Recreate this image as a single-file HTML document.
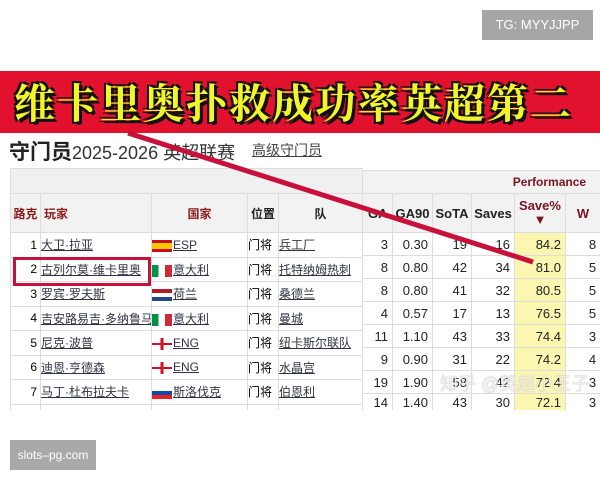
<!DOCTYPE html>
<html><head><meta charset="utf-8"><style>
*{margin:0;padding:0;box-sizing:border-box}
body{width:600px;height:480px;background:#fff;position:relative;overflow:hidden;font-family:"Liberation Sans","Noto Sans CJK SC",sans-serif}
.a{position:absolute}
.tg{left:482px;top:10px;width:111px;height:30px;background:#a6a6a6;color:#fff;font-size:13px;line-height:30px;text-align:center}
.sl{left:10px;top:440px;width:86px;height:30px;background:#a9a9a9;color:#fff;font-size:12px;line-height:30px;text-align:center}
.ban{left:0;top:71px;width:600px;height:62px;background:#e2112e}
.bt{left:14px;top:72px;width:590px;font-size:41px;line-height:58px;font-weight:bold;color:#f2f52a;font-family:"Noto Serif CJK SC","Noto Sans CJK SC",serif;letter-spacing:2px;white-space:nowrap;text-shadow:-2px -2px 0 #111,2px -2px 0 #111,-2px 2px 0 #111,2px 2px 0 #111,3px 3px 0 #111}
.ti{left:9px;top:136px;font-size:21px;font-weight:bold;color:#222;white-space:nowrap}
.ti span{font-size:18px;font-weight:normal;color:#333}
.lk{left:252px;top:140px;font-size:14px;color:#444;text-decoration:underline}
table{border-collapse:collapse;position:absolute;font-size:12px;table-layout:fixed}
td{border:1px solid #ddd;white-space:nowrap;overflow:hidden}
.L{left:10px;top:168px;width:352px}
.R{left:362px;top:170px;width:238px}
.hd td{background:#f2f2f2;font-weight:bold;color:#8b1a1a;text-align:center}
.lnk{color:#334;text-decoration:underline}
.y{background:#fbf7b0}
.R td{text-align:right;padding-right:4px;font-size:13px;color:#222}
.fl{display:inline-block;width:20px;height:12px;vertical-align:middle;margin-right:1px}
</style></head><body>
<div class="a tg">TG: MYYJJPP</div>
<div class="a ban"></div>
<div class="a bt">维卡里奥扑救成功率英超第二</div>
<div class="a ti">守门员<span>2025-2026 英超联赛</span></div>
<div class="a lk">高级守门员</div>

<table class="L">
<colgroup><col style="width:30px"><col style="width:111px"><col style="width:96px"><col style="width:31px"><col style="width:84px"></colgroup>
<tr class="hd"><td colspan="5" style="height:25px;background:#f0f0f0"></td></tr>
<tr class="hd" style="height:39px"><td>路克</td><td style="text-align:left;padding-left:3px">玩家</td><td>国家</td><td style="color:#222">位置</td><td style="color:#222">队</td></tr>
<tr style="height:24.5px"><td style="text-align:right;padding-right:3px">1</td><td class="lnk">大卫·拉亚</td><td><span class="fl" style="background:linear-gradient(#c60b1e 25%,#ffc400 25%,#ffc400 75%,#c60b1e 75%)"></span><span class="lnk">ESP</span></td><td>门将</td><td class="lnk">兵工厂</td></tr>
<tr style="height:24.5px"><td style="text-align:right;padding-right:3px">2</td><td class="lnk">古列尔莫·维卡里奥</td><td><span class="fl" style="background:linear-gradient(90deg,#009246 33%,#fff 33%,#fff 66%,#ce2b37 66%)"></span><span class="lnk">意大利</span></td><td>门将</td><td class="lnk">托特纳姆热刺</td></tr>
<tr style="height:24.5px"><td style="text-align:right;padding-right:3px">3</td><td class="lnk">罗宾·罗夫斯</td><td><span class="fl" style="background:linear-gradient(#ae1c28 33%,#fff 33%,#fff 66%,#21468b 66%)"></span><span class="lnk">荷兰</span></td><td>门将</td><td class="lnk">桑德兰</td></tr>
<tr style="height:24.5px"><td style="text-align:right;padding-right:3px">4</td><td class="lnk">吉安路易吉·多纳鲁马</td><td><span class="fl" style="background:linear-gradient(90deg,#009246 33%,#fff 33%,#fff 66%,#ce2b37 66%)"></span><span class="lnk">意大利</span></td><td>门将</td><td class="lnk">曼城</td></tr>
<tr style="height:24.5px"><td style="text-align:right;padding-right:3px">5</td><td class="lnk">尼克·波普</td><td><span class="fl" style="background:linear-gradient(90deg,transparent 42%,#ce1124 42%,#ce1124 58%,transparent 58%),linear-gradient(#fff 40%,#ce1124 40%,#ce1124 60%,#fff 60%)"></span><span class="lnk">ENG</span></td><td>门将</td><td class="lnk">纽卡斯尔联队</td></tr>
<tr style="height:24.5px"><td style="text-align:right;padding-right:3px">6</td><td class="lnk">迪恩·亨德森</td><td><span class="fl" style="background:linear-gradient(90deg,transparent 42%,#ce1124 42%,#ce1124 58%,transparent 58%),linear-gradient(#fff 40%,#ce1124 40%,#ce1124 60%,#fff 60%)"></span><span class="lnk">ENG</span></td><td>门将</td><td class="lnk">水晶宫</td></tr>
<tr style="height:24.5px"><td style="text-align:right;padding-right:3px">7</td><td class="lnk">马丁·杜布拉夫卡</td><td><span class="fl" style="background:linear-gradient(#fff 33%,#0b4ea2 33%,#0b4ea2 66%,#ee1c25 66%)"></span><span class="lnk">斯洛伐克</span></td><td>门将</td><td class="lnk">伯恩利</td></tr>
<tr style="height:20px"><td></td><td></td><td></td><td></td><td></td></tr>
</table>

<table class="R">
<colgroup><col style="width:30px"><col style="width:40px"><col style="width:39px"><col style="width:43px"><col style="width:51px"><col style="width:35px"></colgroup>
<tr class="hd"><td colspan="6" style="height:23px;text-align:right;padding-right:14px;font-size:12px;color:#7a1420">Performance</td></tr>
<tr class="hd" style="height:39px"><td style="color:#222;text-align:left;padding-left:5px">GA</td><td style="color:#222;text-align:center;padding:0">GA90</td><td style="color:#222;text-align:center;padding:0">SoTA</td><td style="color:#222;text-align:center;padding:0">Saves</td><td class="y" style="text-align:center;line-height:14px;padding:0;color:#7a1420">Save%<br>▼</td><td style="text-align:center;padding:0;color:#7a1420">W</td></tr>
<tr style="height:23px"><td>3</td><td>0.30</td><td>19</td><td>16</td><td class="y">84.2</td><td>8</td></tr>
<tr style="height:23px"><td>8</td><td>0.80</td><td>42</td><td>34</td><td class="y">81.0</td><td>5</td></tr>
<tr style="height:23px"><td>8</td><td>0.80</td><td>41</td><td>32</td><td class="y">80.5</td><td>5</td></tr>
<tr style="height:23px"><td>4</td><td>0.57</td><td>17</td><td>13</td><td class="y">76.5</td><td>5</td></tr>
<tr style="height:23px"><td>11</td><td>1.10</td><td>43</td><td>33</td><td class="y">74.4</td><td>3</td></tr>
<tr style="height:23px"><td>9</td><td>0.90</td><td>31</td><td>22</td><td class="y">74.2</td><td>4</td></tr>
<tr style="height:23px"><td>19</td><td>1.90</td><td>58</td><td>42</td><td class="y">72.4</td><td>3</td></tr>
<tr style="height:17px"><td>14</td><td>1.40</td><td>43</td><td>30</td><td class="y">72.1</td><td>3</td></tr>
</table>
<div class="a" style="left:0;top:410px;width:600px;height:30px;background:#fff"></div>
<div class="a" style="left:440px;top:370px;font-size:18px;color:rgba(255,255,255,.8);text-shadow:0 0 1px #999;white-space:nowrap">知乎 @英超小王子</div>
<div class="a" style="left:13px;top:257px;width:138px;height:29px;border:3px solid #c8113a"></div>
<svg class="a" style="left:0;top:0" width="600" height="480"><line x1="128" y1="133" x2="533" y2="262" stroke="#c8113a" stroke-width="5"/></svg>
<div class="a sl">slots–pg.com</div>
</body></html>
